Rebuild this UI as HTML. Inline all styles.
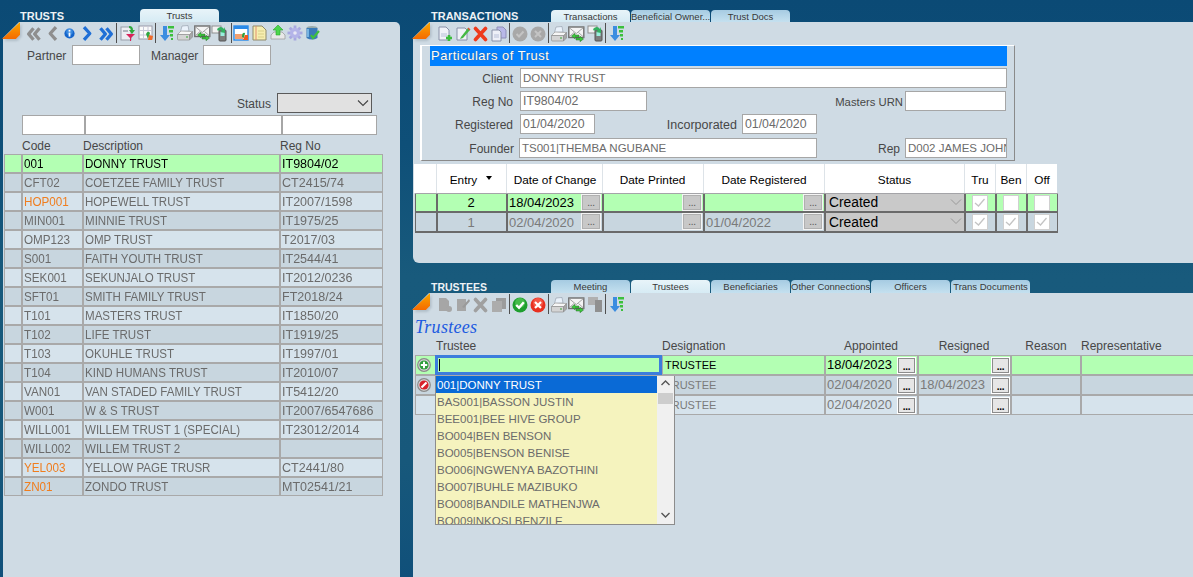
<!DOCTYPE html><html><head><meta charset="utf-8"><style>
*{margin:0;padding:0;box-sizing:border-box}
html,body{width:1193px;height:577px;overflow:hidden}
body{position:relative;font-family:"Liberation Sans",sans-serif;font-size:12px;
 background:linear-gradient(180deg,#0b4a75 0%,#0e4f78 25%,#185a7c 48%,#17587b 80%,#10507a 100%);}
.a{position:absolute}
.t{white-space:nowrap;line-height:14px}
.panel{background:#cfdbe4}
.ttl{font-weight:bold;font-size:11px;color:#eef2f6;line-height:12px}
.tab{border-radius:4px 4px 0 0;font-size:9.5px;color:#383838;text-align:center;line-height:14px;overflow:hidden;white-space:nowrap}
.tabA{background:linear-gradient(180deg,#e8f4f9,#d6ebf4)}
.tabI{background:linear-gradient(180deg,#a6cbe2 0%,#b8d8ea 60%,#c4e0ef 100%)}
.dog{width:17px;height:17px}
.inp{background:#fff;border:1px solid #a6a6a6}
.lbl{color:#474747}
.sep{width:2px;background:#5a5a5a}
</style></head><body>
<svg width="0" height="0" style="position:absolute"><defs><linearGradient id="og" x1="0" y1="0" x2="0" y2="1"><stop offset="0" stop-color="#f9a800"/><stop offset="1" stop-color="#f56a00"/></linearGradient><filter id="bl" x="-20%" y="-20%" width="140%" height="140%"><feGaussianBlur stdDeviation="1"/></filter></defs></svg>
<div class="a panel" style="left:3px;top:22px;width:397px;height:560px;border-top-right-radius:5px;clip-path:polygon(16px 0,100% 0,100% 100%,0 100%,0 16px);"></div>
<div class="a panel" style="left:413px;top:22px;width:800px;height:241px;border-bottom-left-radius:6px;clip-path:polygon(16px 0,100% 0,100% 100%,0 100%,0 16px);"></div>
<div class="a panel" style="left:413px;top:293px;width:800px;height:300px;clip-path:polygon(16px 0,100% 0,100% 100%,0 100%,0 16px);"></div>
<svg class="a" style="left:2px;top:22px" width="22" height="22"><path d="M19.5 2 V14.5 L15.5 19 H2Z" fill="#7a8a96" opacity=".35" filter="url(#bl)"/><path d="M18 0 V12.8 L13.8 17 H0Z" fill="url(#og)"/></svg>
<svg class="a" style="left:412px;top:22px" width="22" height="22"><path d="M19.5 2 V14.5 L15.5 19 H2Z" fill="#7a8a96" opacity=".35" filter="url(#bl)"/><path d="M18 0 V12.8 L13.8 17 H0Z" fill="url(#og)"/></svg>
<svg class="a" style="left:412px;top:293px" width="22" height="22"><path d="M19.5 2 V14.5 L15.5 19 H2Z" fill="#7a8a96" opacity=".35" filter="url(#bl)"/><path d="M18 0 V12.8 L13.8 17 H0Z" fill="url(#og)"/></svg>
<div class="a t ttl" style="left:20px;top:10px;">TRUSTS</div>
<div class="a t ttl" style="left:431px;top:10px;">TRANSACTIONS</div>
<div class="a t ttl" style="left:431px;top:281px;font-size:10.5px">TRUSTEES</div>
<div class="a tab tabA" style="left:140px;top:9px;width:79px;height:13px;">Trusts</div>
<div class="a tab tabA" style="left:551px;top:10px;width:79px;height:12px;">Transactions</div>
<div class="a tab tabI" style="left:631px;top:10px;width:79px;height:12px;">Beneficial Owner...</div>
<div class="a tab tabI" style="left:711px;top:10px;width:79px;height:12px;">Trust Docs</div>
<svg class="a" style="left:26px;top:27px" width="16" height="14" viewBox="0 0 16 14"><path d="M7.5 1.2 L2.6 7 L7.5 12.8 M13.5 1.2 L8.6 7 L13.5 12.8" stroke="#8e8e8e" stroke-width="3.3" fill="none" stroke-linejoin="round"/></svg>
<svg class="a" style="left:47px;top:26px" width="11" height="15" viewBox="0 0 11 15"><path d="M9 1.2 L3.2 7.5 L9 13.8" stroke="#8e8e8e" stroke-width="3.3" fill="none" stroke-linejoin="round"/></svg>
<svg class="a" style="left:64px;top:28px" width="11" height="11" viewBox="0 0 11 11"><circle cx="5.5" cy="5.5" r="5.1" fill="#1465cc"/><circle cx="5.5" cy="3.8" r="3.3" fill="#5aaaf2" opacity=".55"/><rect x="4.6" y="1.8" width="1.8" height="1.8" fill="#fff"/><rect x="4.6" y="4.6" width="1.8" height="4" fill="#fff"/></svg>
<svg class="a" style="left:82px;top:26px" width="11" height="15" viewBox="0 0 11 15"><path d="M2 1.2 L7.8 7.5 L2 13.8" stroke="#1f6fd6" stroke-width="3.3" fill="none" stroke-linejoin="round"/></svg>
<svg class="a" style="left:98px;top:27px" width="16" height="14" viewBox="0 0 16 14"><path d="M2.5 1.2 L7.4 7 L2.5 12.8 M8.5 1.2 L13.4 7 L8.5 12.8" stroke="#1f6fd6" stroke-width="3.3" fill="none" stroke-linejoin="round"/></svg>
<div class="a " style="left:116px;top:23px;width:1px;height:20px;background:#4f4f4f"></div>
<svg class="a" style="left:120px;top:25px" width="16" height="17" viewBox="0 0 16 17"><rect x="1" y="2" width="10" height="13" fill="#eceef2" stroke="#9aa0aa"/><rect x="3" y="5" width="5" height="2" fill="#b0b4bc"/><path d="M6 9 H15 L11 13 V16 H10 V13 Z" fill="#d8245a"/><path d="M9 1 Q13 1 13 5 L15 5 L12 9 L9 5 L11 5 Q11 3 9 3Z" fill="#2eaa3a"/></svg>
<svg class="a" style="left:138px;top:25px" width="16" height="16" viewBox="0 0 16 16"><rect x="1" y="1" width="13" height="13" fill="#fafafa" stroke="#9a9aa8"/><path d="M1 5.5H14M1 10H14M5.5 1V14M10 1V14" stroke="#c8c8d8"/><path d="M8 9 Q10 5 12 8 L10 14" fill="#2fa640"/><path d="M11 10 L15 11 L14 15 L10 15 Z" fill="#f06a2a"/></svg>
<div class="a " style="left:155px;top:23px;width:1px;height:20px;background:#4f4f4f"></div>
<svg class="a" style="left:159px;top:25px" width="16" height="17" viewBox="0 0 16 17"><path d="M4 1 H8 V10 H11 L6 16 L1 10 H4 Z" fill="#3c8de0"/><rect x="9" y="1" width="6" height="2.5" fill="#3cc03c"/><rect x="10" y="5" width="4" height="2.5" fill="#3cc03c"/><rect x="11" y="9" width="3" height="2.5" fill="#3cc03c"/><rect x="12" y="13" width="2" height="2" fill="#3cc03c"/></svg>
<svg class="a" style="left:177px;top:25px" width="16" height="16" viewBox="0 0 16 16"><path d="M3.5 6.5 L5 1 L11 0.5 L12 6Z" fill="#eaf2fb" stroke="#9aa4b0" stroke-width=".7"/><path d="M0.5 9.5 L4 6 L15.5 6.5 L12.5 10Z" fill="#f6f6f6" stroke="#9a9a9a" stroke-width=".7"/><path d="M0.5 9.5 H12.5 V15 H1.5 Q0.5 15 0.5 14Z" fill="#d4d4d4" stroke="#8f8f8f" stroke-width=".7"/><path d="M12.5 10 L15.5 6.5 V12 L12.5 15Z" fill="#a8a8a8" stroke="#8f8f8f" stroke-width=".7"/><rect x="9" y="11.5" width="2" height="1" fill="#32a832"/></svg>
<svg class="a" style="left:194px;top:25px" width="17" height="16" viewBox="0 0 17 16"><rect x="0.8" y="1" width="15" height="10.5" fill="#f4f4f4" stroke="#6e6e6e" stroke-width="1.4"/><path d="M1 1.5 L8.3 7.5 L15.5 1.5 M1 11 L6 6.5 M15.5 11 L10.5 6.5" stroke="#9a9a9a" fill="none" stroke-width=".9"/><path d="M3.5 10 L7 7.3 V9 H11 V11 H7 V12.7Z" fill="#3cc83c" stroke="#2a6a2a" stroke-width=".5"/><path d="M15.5 13 L12 10.3 V12 H8 V14 H12 V15.7Z" fill="#3cc83c" stroke="#2a6a2a" stroke-width=".5"/></svg>
<svg class="a" style="left:211px;top:25px" width="17" height="17" viewBox="0 0 17 17"><rect x="1" y="1" width="9" height="7" fill="#f2f2f2" stroke="#8f8f8f"/><rect x="8" y="5" width="7" height="11" rx="1" fill="#7d7d7d" stroke="#555"/><rect x="9.5" y="7" width="4" height="4" fill="#9ed"/><path d="M6 4 Q10 0 13 4 L14 2 L14 8 L9 7 L11 6 Q9 4 7 6Z" fill="#33b060"/></svg>
<div class="a " style="left:231px;top:23px;width:1px;height:20px;background:#4f4f4f"></div>
<svg class="a" style="left:233px;top:25px" width="16" height="16" viewBox="0 0 16 16"><rect x="1" y="1" width="14" height="14" fill="#fff" stroke="#2a8ae8" stroke-width="1.4"/><rect x="1" y="1" width="14" height="3" fill="#2a8ae8"/><rect x="2" y="9" width="8" height="5" fill="#f2a070"/><path d="M9 12 Q9 7 12 8 L11 13" fill="#2ea040"/><path d="M12 10 L15 10 L15 15 L10 15Z" fill="#f05a20"/></svg>
<svg class="a" style="left:252px;top:25px" width="15" height="16" viewBox="0 0 15 16"><path d="M1 1 H10 L14 5 V15 H1Z" fill="#f6eeb0" stroke="#8f8a6a"/><path d="M4 1 V15" stroke="#e09070"/><path d="M6 6 H12 M6 9 H12 M6 12 H12" stroke="#d8cf88"/></svg>
<svg class="a" style="left:270px;top:24px" width="16" height="17" viewBox="0 0 16 17"><path d="M1 11 L4 8 H12 L15 11 V15 H1Z" fill="#e8e8e8" stroke="#a0a0a0" stroke-width=".8"/><path d="M8 1 L13 6 H10 V11 H6 V6 H3Z" fill="#4cd64c" stroke="#2aa52a" stroke-width=".6"/></svg>
<svg class="a" style="left:287px;top:25px" width="16" height="16" viewBox="0 0 16 16"><rect x="6.6" y="0.5" width="2.8" height="4" fill="#a8a8e0" transform="rotate(0 8 8)"/><rect x="6.6" y="0.5" width="2.8" height="4" fill="#a8a8e0" transform="rotate(45 8 8)"/><rect x="6.6" y="0.5" width="2.8" height="4" fill="#a8a8e0" transform="rotate(90 8 8)"/><rect x="6.6" y="0.5" width="2.8" height="4" fill="#a8a8e0" transform="rotate(135 8 8)"/><rect x="6.6" y="0.5" width="2.8" height="4" fill="#a8a8e0" transform="rotate(180 8 8)"/><rect x="6.6" y="0.5" width="2.8" height="4" fill="#a8a8e0" transform="rotate(225 8 8)"/><rect x="6.6" y="0.5" width="2.8" height="4" fill="#a8a8e0" transform="rotate(270 8 8)"/><rect x="6.6" y="0.5" width="2.8" height="4" fill="#a8a8e0" transform="rotate(315 8 8)"/><circle cx="8" cy="8" r="5" fill="#b4b4e8"/><circle cx="8" cy="8" r="1.8" fill="#e8e8f4"/></svg>
<svg class="a" style="left:305px;top:25px" width="15" height="16" viewBox="0 0 15 16"><ellipse cx="7" cy="3" rx="5.5" ry="2" fill="#9aa"/><path d="M1.5 3 V13 Q7 16 12.5 13 V3Z" fill="#3a7ab8"/><path d="M3 4 V12" stroke="#8cc8f0" stroke-width="1.5"/><path d="M6 10 L8 13 L14 6" stroke="#3ec03e" stroke-width="2.2" fill="none"/></svg>
<div class="a t lbl" style="left:27px;top:49px;">Partner</div>
<div class="a inp" style="left:72px;top:45px;width:68px;height:20px;"></div>
<div class="a t lbl" style="left:151px;top:49px;">Manager</div>
<div class="a inp" style="left:203px;top:45px;width:68px;height:20px;"></div>
<div class="a t lbl" style="left:237px;top:97px;">Status</div>
<div class="a " style="left:277px;top:93px;width:95px;height:20px;background:#e1e1e1;border:1px solid #5a5a5a"></div>
<svg class="a" style="left:356px;top:97px" width="14" height="12" viewBox="0 0 14 12"><path d="M2 3.5 L7 8.5 L12 3.5" stroke="#444" stroke-width="1.1" fill="none"/></svg>
<div class="a inp" style="left:22px;top:115px;width:63px;height:20px;"></div>
<div class="a inp" style="left:85px;top:115px;width:197px;height:20px;"></div>
<div class="a inp" style="left:282px;top:115px;width:95px;height:20px;"></div>
<div class="a t lbl" style="left:22px;top:139px;">Code</div>
<div class="a t lbl" style="left:83px;top:139px;">Description</div>
<div class="a t lbl" style="left:280px;top:139px;">Reg No</div>
<div class="a " style="left:4px;top:154px;width:379px;height:342px;background:#a9a9a9"></div>
<div class="a " style="left:5px;top:155px;width:16px;height:17px;background:#b3ffb3"></div>
<div class="a " style="left:23px;top:155px;width:59px;height:17px;background:#b3ffb3"></div>
<div class="a " style="left:84px;top:155px;width:195px;height:17px;background:#b3ffb3"></div>
<div class="a " style="left:281px;top:155px;width:101px;height:17px;background:#b3ffb3"></div>
<div class="a t " style="left:24px;top:156px;color:#000;line-height:17px;font-size:12.3px;transform:scaleX(.95);transform-origin:0 0">001</div>
<div class="a t " style="left:85px;top:156px;color:#000;line-height:17px;font-size:12.3px;transform:scaleX(.94);transform-origin:0 0">DONNY TRUST</div>
<div class="a t " style="left:282px;top:156px;color:#000;line-height:17px;font-size:12.3px;transform:scaleX(1.02);transform-origin:0 0">IT9804/02</div>
<div class="a " style="left:5px;top:174px;width:16px;height:17px;background:#c8d6df"></div>
<div class="a " style="left:23px;top:174px;width:59px;height:17px;background:#c8d6df"></div>
<div class="a " style="left:84px;top:174px;width:195px;height:17px;background:#c8d6df"></div>
<div class="a " style="left:281px;top:174px;width:101px;height:17px;background:#c8d6df"></div>
<div class="a t " style="left:24px;top:175px;color:#6b6b6b;line-height:17px;font-size:12.3px;transform:scaleX(.95);transform-origin:0 0">CFT02</div>
<div class="a t " style="left:85px;top:175px;color:#6b6b6b;line-height:17px;font-size:12.3px;transform:scaleX(.94);transform-origin:0 0">COETZEE FAMILY TRUST</div>
<div class="a t " style="left:282px;top:175px;color:#6b6b6b;line-height:17px;font-size:12.3px;transform:scaleX(1.02);transform-origin:0 0">CT2415/74</div>
<div class="a " style="left:5px;top:193px;width:16px;height:17px;background:#d6e3ec"></div>
<div class="a " style="left:23px;top:193px;width:59px;height:17px;background:#d6e3ec"></div>
<div class="a " style="left:84px;top:193px;width:195px;height:17px;background:#d6e3ec"></div>
<div class="a " style="left:281px;top:193px;width:101px;height:17px;background:#d6e3ec"></div>
<div class="a t " style="left:24px;top:194px;color:#f07d1e;line-height:17px;font-size:12.3px;transform:scaleX(.95);transform-origin:0 0">HOP001</div>
<div class="a t " style="left:85px;top:194px;color:#6b6b6b;line-height:17px;font-size:12.3px;transform:scaleX(.94);transform-origin:0 0">HOPEWELL TRUST</div>
<div class="a t " style="left:282px;top:194px;color:#6b6b6b;line-height:17px;font-size:12.3px;transform:scaleX(1.02);transform-origin:0 0">IT2007/1598</div>
<div class="a " style="left:5px;top:212px;width:16px;height:17px;background:#c8d6df"></div>
<div class="a " style="left:23px;top:212px;width:59px;height:17px;background:#c8d6df"></div>
<div class="a " style="left:84px;top:212px;width:195px;height:17px;background:#c8d6df"></div>
<div class="a " style="left:281px;top:212px;width:101px;height:17px;background:#c8d6df"></div>
<div class="a t " style="left:24px;top:213px;color:#6b6b6b;line-height:17px;font-size:12.3px;transform:scaleX(.95);transform-origin:0 0">MIN001</div>
<div class="a t " style="left:85px;top:213px;color:#6b6b6b;line-height:17px;font-size:12.3px;transform:scaleX(.94);transform-origin:0 0">MINNIE TRUST</div>
<div class="a t " style="left:282px;top:213px;color:#6b6b6b;line-height:17px;font-size:12.3px;transform:scaleX(1.02);transform-origin:0 0">IT1975/25</div>
<div class="a " style="left:5px;top:231px;width:16px;height:17px;background:#d6e3ec"></div>
<div class="a " style="left:23px;top:231px;width:59px;height:17px;background:#d6e3ec"></div>
<div class="a " style="left:84px;top:231px;width:195px;height:17px;background:#d6e3ec"></div>
<div class="a " style="left:281px;top:231px;width:101px;height:17px;background:#d6e3ec"></div>
<div class="a t " style="left:24px;top:232px;color:#6b6b6b;line-height:17px;font-size:12.3px;transform:scaleX(.95);transform-origin:0 0">OMP123</div>
<div class="a t " style="left:85px;top:232px;color:#6b6b6b;line-height:17px;font-size:12.3px;transform:scaleX(.94);transform-origin:0 0">OMP TRUST</div>
<div class="a t " style="left:282px;top:232px;color:#6b6b6b;line-height:17px;font-size:12.3px;transform:scaleX(1.02);transform-origin:0 0">T2017/03</div>
<div class="a " style="left:5px;top:250px;width:16px;height:17px;background:#c8d6df"></div>
<div class="a " style="left:23px;top:250px;width:59px;height:17px;background:#c8d6df"></div>
<div class="a " style="left:84px;top:250px;width:195px;height:17px;background:#c8d6df"></div>
<div class="a " style="left:281px;top:250px;width:101px;height:17px;background:#c8d6df"></div>
<div class="a t " style="left:24px;top:251px;color:#6b6b6b;line-height:17px;font-size:12.3px;transform:scaleX(.95);transform-origin:0 0">S001</div>
<div class="a t " style="left:85px;top:251px;color:#6b6b6b;line-height:17px;font-size:12.3px;transform:scaleX(.94);transform-origin:0 0">FAITH YOUTH TRUST</div>
<div class="a t " style="left:282px;top:251px;color:#6b6b6b;line-height:17px;font-size:12.3px;transform:scaleX(1.02);transform-origin:0 0">IT2544/41</div>
<div class="a " style="left:5px;top:269px;width:16px;height:17px;background:#d6e3ec"></div>
<div class="a " style="left:23px;top:269px;width:59px;height:17px;background:#d6e3ec"></div>
<div class="a " style="left:84px;top:269px;width:195px;height:17px;background:#d6e3ec"></div>
<div class="a " style="left:281px;top:269px;width:101px;height:17px;background:#d6e3ec"></div>
<div class="a t " style="left:24px;top:270px;color:#6b6b6b;line-height:17px;font-size:12.3px;transform:scaleX(.95);transform-origin:0 0">SEK001</div>
<div class="a t " style="left:85px;top:270px;color:#6b6b6b;line-height:17px;font-size:12.3px;transform:scaleX(.94);transform-origin:0 0">SEKUNJALO TRUST</div>
<div class="a t " style="left:282px;top:270px;color:#6b6b6b;line-height:17px;font-size:12.3px;transform:scaleX(1.02);transform-origin:0 0">IT2012/0236</div>
<div class="a " style="left:5px;top:288px;width:16px;height:17px;background:#c8d6df"></div>
<div class="a " style="left:23px;top:288px;width:59px;height:17px;background:#c8d6df"></div>
<div class="a " style="left:84px;top:288px;width:195px;height:17px;background:#c8d6df"></div>
<div class="a " style="left:281px;top:288px;width:101px;height:17px;background:#c8d6df"></div>
<div class="a t " style="left:24px;top:289px;color:#6b6b6b;line-height:17px;font-size:12.3px;transform:scaleX(.95);transform-origin:0 0">SFT01</div>
<div class="a t " style="left:85px;top:289px;color:#6b6b6b;line-height:17px;font-size:12.3px;transform:scaleX(.94);transform-origin:0 0">SMITH FAMILY TRUST</div>
<div class="a t " style="left:282px;top:289px;color:#6b6b6b;line-height:17px;font-size:12.3px;transform:scaleX(1.02);transform-origin:0 0">FT2018/24</div>
<div class="a " style="left:5px;top:307px;width:16px;height:17px;background:#d6e3ec"></div>
<div class="a " style="left:23px;top:307px;width:59px;height:17px;background:#d6e3ec"></div>
<div class="a " style="left:84px;top:307px;width:195px;height:17px;background:#d6e3ec"></div>
<div class="a " style="left:281px;top:307px;width:101px;height:17px;background:#d6e3ec"></div>
<div class="a t " style="left:24px;top:308px;color:#6b6b6b;line-height:17px;font-size:12.3px;transform:scaleX(.95);transform-origin:0 0">T101</div>
<div class="a t " style="left:85px;top:308px;color:#6b6b6b;line-height:17px;font-size:12.3px;transform:scaleX(.94);transform-origin:0 0">MASTERS TRUST</div>
<div class="a t " style="left:282px;top:308px;color:#6b6b6b;line-height:17px;font-size:12.3px;transform:scaleX(1.02);transform-origin:0 0">IT1850/20</div>
<div class="a " style="left:5px;top:326px;width:16px;height:17px;background:#c8d6df"></div>
<div class="a " style="left:23px;top:326px;width:59px;height:17px;background:#c8d6df"></div>
<div class="a " style="left:84px;top:326px;width:195px;height:17px;background:#c8d6df"></div>
<div class="a " style="left:281px;top:326px;width:101px;height:17px;background:#c8d6df"></div>
<div class="a t " style="left:24px;top:327px;color:#6b6b6b;line-height:17px;font-size:12.3px;transform:scaleX(.95);transform-origin:0 0">T102</div>
<div class="a t " style="left:85px;top:327px;color:#6b6b6b;line-height:17px;font-size:12.3px;transform:scaleX(.94);transform-origin:0 0">LIFE TRUST</div>
<div class="a t " style="left:282px;top:327px;color:#6b6b6b;line-height:17px;font-size:12.3px;transform:scaleX(1.02);transform-origin:0 0">IT1919/25</div>
<div class="a " style="left:5px;top:345px;width:16px;height:17px;background:#d6e3ec"></div>
<div class="a " style="left:23px;top:345px;width:59px;height:17px;background:#d6e3ec"></div>
<div class="a " style="left:84px;top:345px;width:195px;height:17px;background:#d6e3ec"></div>
<div class="a " style="left:281px;top:345px;width:101px;height:17px;background:#d6e3ec"></div>
<div class="a t " style="left:24px;top:346px;color:#6b6b6b;line-height:17px;font-size:12.3px;transform:scaleX(.95);transform-origin:0 0">T103</div>
<div class="a t " style="left:85px;top:346px;color:#6b6b6b;line-height:17px;font-size:12.3px;transform:scaleX(.94);transform-origin:0 0">OKUHLE TRUST</div>
<div class="a t " style="left:282px;top:346px;color:#6b6b6b;line-height:17px;font-size:12.3px;transform:scaleX(1.02);transform-origin:0 0">IT1997/01</div>
<div class="a " style="left:5px;top:364px;width:16px;height:17px;background:#c8d6df"></div>
<div class="a " style="left:23px;top:364px;width:59px;height:17px;background:#c8d6df"></div>
<div class="a " style="left:84px;top:364px;width:195px;height:17px;background:#c8d6df"></div>
<div class="a " style="left:281px;top:364px;width:101px;height:17px;background:#c8d6df"></div>
<div class="a t " style="left:24px;top:365px;color:#6b6b6b;line-height:17px;font-size:12.3px;transform:scaleX(.95);transform-origin:0 0">T104</div>
<div class="a t " style="left:85px;top:365px;color:#6b6b6b;line-height:17px;font-size:12.3px;transform:scaleX(.94);transform-origin:0 0">KIND HUMANS TRUST</div>
<div class="a t " style="left:282px;top:365px;color:#6b6b6b;line-height:17px;font-size:12.3px;transform:scaleX(1.02);transform-origin:0 0">IT2010/07</div>
<div class="a " style="left:5px;top:383px;width:16px;height:17px;background:#d6e3ec"></div>
<div class="a " style="left:23px;top:383px;width:59px;height:17px;background:#d6e3ec"></div>
<div class="a " style="left:84px;top:383px;width:195px;height:17px;background:#d6e3ec"></div>
<div class="a " style="left:281px;top:383px;width:101px;height:17px;background:#d6e3ec"></div>
<div class="a t " style="left:24px;top:384px;color:#6b6b6b;line-height:17px;font-size:12.3px;transform:scaleX(.95);transform-origin:0 0">VAN01</div>
<div class="a t " style="left:85px;top:384px;color:#6b6b6b;line-height:17px;font-size:12.3px;transform:scaleX(.94);transform-origin:0 0">VAN STADED FAMILY TRUST</div>
<div class="a t " style="left:282px;top:384px;color:#6b6b6b;line-height:17px;font-size:12.3px;transform:scaleX(1.02);transform-origin:0 0">IT5412/20</div>
<div class="a " style="left:5px;top:402px;width:16px;height:17px;background:#c8d6df"></div>
<div class="a " style="left:23px;top:402px;width:59px;height:17px;background:#c8d6df"></div>
<div class="a " style="left:84px;top:402px;width:195px;height:17px;background:#c8d6df"></div>
<div class="a " style="left:281px;top:402px;width:101px;height:17px;background:#c8d6df"></div>
<div class="a t " style="left:24px;top:403px;color:#6b6b6b;line-height:17px;font-size:12.3px;transform:scaleX(.95);transform-origin:0 0">W001</div>
<div class="a t " style="left:85px;top:403px;color:#6b6b6b;line-height:17px;font-size:12.3px;transform:scaleX(.94);transform-origin:0 0">W &amp; S TRUST</div>
<div class="a t " style="left:282px;top:403px;color:#6b6b6b;line-height:17px;font-size:12.3px;transform:scaleX(1.02);transform-origin:0 0">IT2007/6547686</div>
<div class="a " style="left:5px;top:421px;width:16px;height:17px;background:#d6e3ec"></div>
<div class="a " style="left:23px;top:421px;width:59px;height:17px;background:#d6e3ec"></div>
<div class="a " style="left:84px;top:421px;width:195px;height:17px;background:#d6e3ec"></div>
<div class="a " style="left:281px;top:421px;width:101px;height:17px;background:#d6e3ec"></div>
<div class="a t " style="left:24px;top:422px;color:#6b6b6b;line-height:17px;font-size:12.3px;transform:scaleX(.95);transform-origin:0 0">WILL001</div>
<div class="a t " style="left:85px;top:422px;color:#6b6b6b;line-height:17px;font-size:12.3px;transform:scaleX(.94);transform-origin:0 0">WILLEM TRUST 1 (SPECIAL)</div>
<div class="a t " style="left:282px;top:422px;color:#6b6b6b;line-height:17px;font-size:12.3px;transform:scaleX(1.02);transform-origin:0 0">IT23012/2014</div>
<div class="a " style="left:5px;top:440px;width:16px;height:17px;background:#c8d6df"></div>
<div class="a " style="left:23px;top:440px;width:59px;height:17px;background:#c8d6df"></div>
<div class="a " style="left:84px;top:440px;width:195px;height:17px;background:#c8d6df"></div>
<div class="a " style="left:281px;top:440px;width:101px;height:17px;background:#c8d6df"></div>
<div class="a t " style="left:24px;top:441px;color:#6b6b6b;line-height:17px;font-size:12.3px;transform:scaleX(.95);transform-origin:0 0">WILL002</div>
<div class="a t " style="left:85px;top:441px;color:#6b6b6b;line-height:17px;font-size:12.3px;transform:scaleX(.94);transform-origin:0 0">WILLEM TRUST 2</div>
<div class="a t " style="left:282px;top:441px;color:#6b6b6b;line-height:17px;font-size:12.3px;transform:scaleX(1.02);transform-origin:0 0"></div>
<div class="a " style="left:5px;top:459px;width:16px;height:17px;background:#d6e3ec"></div>
<div class="a " style="left:23px;top:459px;width:59px;height:17px;background:#d6e3ec"></div>
<div class="a " style="left:84px;top:459px;width:195px;height:17px;background:#d6e3ec"></div>
<div class="a " style="left:281px;top:459px;width:101px;height:17px;background:#d6e3ec"></div>
<div class="a t " style="left:24px;top:460px;color:#f07d1e;line-height:17px;font-size:12.3px;transform:scaleX(.95);transform-origin:0 0">YEL003</div>
<div class="a t " style="left:85px;top:460px;color:#6b6b6b;line-height:17px;font-size:12.3px;transform:scaleX(.94);transform-origin:0 0">YELLOW PAGE TRUSR</div>
<div class="a t " style="left:282px;top:460px;color:#6b6b6b;line-height:17px;font-size:12.3px;transform:scaleX(1.02);transform-origin:0 0">CT2441/80</div>
<div class="a " style="left:5px;top:478px;width:16px;height:17px;background:#c8d6df"></div>
<div class="a " style="left:23px;top:478px;width:59px;height:17px;background:#c8d6df"></div>
<div class="a " style="left:84px;top:478px;width:195px;height:17px;background:#c8d6df"></div>
<div class="a " style="left:281px;top:478px;width:101px;height:17px;background:#c8d6df"></div>
<div class="a t " style="left:24px;top:479px;color:#f07d1e;line-height:17px;font-size:12.3px;transform:scaleX(.95);transform-origin:0 0">ZN01</div>
<div class="a t " style="left:85px;top:479px;color:#6b6b6b;line-height:17px;font-size:12.3px;transform:scaleX(.94);transform-origin:0 0">ZONDO TRUST</div>
<div class="a t " style="left:282px;top:479px;color:#6b6b6b;line-height:17px;font-size:12.3px;transform:scaleX(1.02);transform-origin:0 0">MT02541/21</div>
<svg class="a" style="left:438px;top:26px" width="15" height="16" viewBox="0 0 15 16"><path d="M1 1 H8 L11 4 V14 H1Z" fill="#f0f2f8" stroke="#8890a8"/><path d="M3 8 H9 M3 10 H9" stroke="#b8c0d8"/><path d="M11 9 V15 M8 12 H14" stroke="#3cbc3c" stroke-width="2.6"/></svg>
<svg class="a" style="left:456px;top:26px" width="15" height="16" viewBox="0 0 15 16"><path d="M1 2 H9 L11 4 V14 H1Z" fill="#f0f2f8" stroke="#8890a8"/><path d="M5 11 L12 2 L14 4 L7 12 L4 13Z" fill="#44b844"/><path d="M12 2 L14 4" stroke="#e05030" stroke-width="1.5"/></svg>
<svg class="a" style="left:473px;top:26px" width="15" height="16" viewBox="0 0 15 16"><path d="M2.5 2.5 L12.5 13.5 M12.5 2.5 L2.5 13.5" stroke="#ee3a1c" stroke-width="3.6" stroke-linecap="round"/></svg>
<svg class="a" style="left:491px;top:26px" width="16" height="16" viewBox="0 0 16 16"><path d="M6 1 H12 L15 4 V12 H6Z" fill="#b8b8e8" stroke="#8f8fb8"/><path d="M1 4 H8 L10 6 V15 H1Z" fill="#eef0f8" stroke="#8890a8"/><path d="M3 9 H8 M3 11 H8" stroke="#b8c0d8"/></svg>
<div class="a " style="left:509px;top:23px;width:1px;height:20px;background:#4f4f4f"></div>
<svg class="a" style="left:512px;top:26px" width="16" height="16" viewBox="0 0 16 16"><circle cx="8" cy="8" r="7.5" fill="#a8a8a8"/><path d="M4.5 8 L7 10.5 L11.5 5.5" stroke="#c4c4c4" stroke-width="2" fill="none"/></svg>
<svg class="a" style="left:530px;top:26px" width="16" height="16" viewBox="0 0 16 16"><circle cx="8" cy="8" r="7.5" fill="#a8a8a8"/><path d="M5 5 L11 11 M11 5 L5 11" stroke="#c4c4c4" stroke-width="2"/></svg>
<div class="a " style="left:548px;top:23px;width:1px;height:20px;background:#4f4f4f"></div>
<svg class="a" style="left:551px;top:26px" width="16" height="16" viewBox="0 0 16 16"><path d="M3.5 6.5 L5 1 L11 0.5 L12 6Z" fill="#eaf2fb" stroke="#9aa4b0" stroke-width=".7"/><path d="M0.5 9.5 L4 6 L15.5 6.5 L12.5 10Z" fill="#f6f6f6" stroke="#9a9a9a" stroke-width=".7"/><path d="M0.5 9.5 H12.5 V15 H1.5 Q0.5 15 0.5 14Z" fill="#d4d4d4" stroke="#8f8f8f" stroke-width=".7"/><path d="M12.5 10 L15.5 6.5 V12 L12.5 15Z" fill="#a8a8a8" stroke="#8f8f8f" stroke-width=".7"/><rect x="9" y="11.5" width="2" height="1" fill="#32a832"/></svg>
<svg class="a" style="left:568px;top:26px" width="17" height="16" viewBox="0 0 17 16"><rect x="0.8" y="1" width="15" height="10.5" fill="#f4f4f4" stroke="#6e6e6e" stroke-width="1.4"/><path d="M1 1.5 L8.3 7.5 L15.5 1.5 M1 11 L6 6.5 M15.5 11 L10.5 6.5" stroke="#9a9a9a" fill="none" stroke-width=".9"/><path d="M3.5 10 L7 7.3 V9 H11 V11 H7 V12.7Z" fill="#3cc83c" stroke="#2a6a2a" stroke-width=".5"/><path d="M15.5 13 L12 10.3 V12 H8 V14 H12 V15.7Z" fill="#3cc83c" stroke="#2a6a2a" stroke-width=".5"/></svg>
<svg class="a" style="left:587px;top:25px" width="17" height="17" viewBox="0 0 17 17"><rect x="1" y="1" width="9" height="7" fill="#f2f2f2" stroke="#8f8f8f"/><rect x="8" y="5" width="7" height="11" rx="1" fill="#7d7d7d" stroke="#555"/><rect x="9.5" y="7" width="4" height="4" fill="#9ed"/><path d="M6 4 Q10 0 13 4 L14 2 L14 8 L9 7 L11 6 Q9 4 7 6Z" fill="#33b060"/></svg>
<div class="a " style="left:605px;top:23px;width:1px;height:20px;background:#4f4f4f"></div>
<svg class="a" style="left:609px;top:25px" width="16" height="17" viewBox="0 0 16 17"><path d="M4 1 H8 V10 H11 L6 16 L1 10 H4 Z" fill="#3c8de0"/><rect x="9" y="1" width="6" height="2.5" fill="#3cc03c"/><rect x="10" y="5" width="4" height="2.5" fill="#3cc03c"/><rect x="11" y="9" width="3" height="2.5" fill="#3cc03c"/><rect x="12" y="13" width="2" height="2" fill="#3cc03c"/></svg>
<div class="a " style="left:420px;top:45px;width:595px;height:116px;border-top:1px solid #fff;border-left:2px solid #fff;border-right:1px solid #8a8a8a;border-bottom:1px solid #8a8a8a"></div>
<div class="a " style="left:430px;top:46px;width:577px;height:20px;background:#0080ff"></div>
<div class="a t " style="left:431px;top:46px;color:#fff;font-size:13px;line-height:20px;letter-spacing:0.5px;text-shadow:0 0 1px #555">Particulars of Trust</div>
<div class="a inp" style="left:520px;top:68px;width:487px;height:20px;"><div class="t" style="color:#6b6b6b;line-height:18px;padding-left:2px;font-size:11.5px">DONNY TRUST</div></div>
<div class="a t lbl" style="right:680px;top:72px;">Client</div>
<div class="a inp" style="left:520px;top:91px;width:127px;height:20px;"><div class="t" style="color:#6b6b6b;line-height:18px;padding-left:2px;font-size:11.5px;font-size:12.3px">IT9804/02</div></div>
<div class="a t lbl" style="right:680px;top:95px;">Reg No</div>
<div class="a t lbl" style="right:290px;top:95px;font-size:11.3px">Masters URN</div>
<div class="a inp" style="left:905px;top:91px;width:101px;height:20px;"></div>
<div class="a inp" style="left:520px;top:114px;width:75px;height:20px;"><div class="t" style="color:#6b6b6b;line-height:18px;padding-left:2px;font-size:11.5px;font-size:12.3px">01/04/2020</div></div>
<div class="a t lbl" style="right:680px;top:118px;">Registered</div>
<div class="a t lbl" style="right:456px;top:118px;font-size:12.5px">Incorporated</div>
<div class="a inp" style="left:742px;top:114px;width:75px;height:20px;"><div class="t" style="color:#6b6b6b;line-height:18px;padding-left:2px;font-size:11.5px;font-size:12.3px">01/04/2020</div></div>
<div class="a inp" style="left:519px;top:138px;width:298px;height:20px;"><div class="t" style="color:#6b6b6b;line-height:18px;padding-left:2px;font-size:11.5px">TS001|THEMBA NGUBANE</div></div>
<div class="a t lbl" style="right:679px;top:142px;">Founder</div>
<div class="a t lbl" style="right:293px;top:142px;">Rep</div>
<div class="a inp" style="left:905px;top:138px;width:102px;height:20px;overflow:hidden"><div class="t" style="color:#6b6b6b;line-height:18px;padding-left:2px;font-size:11.5px">D002 JAMES JOHNSON</div></div>
<div class="a " style="left:414px;top:164px;width:643px;height:29px;background:#fff"></div>
<div class="a " style="left:436px;top:164px;width:1px;height:29px;background:#dde3e8"></div>
<div class="a " style="left:506px;top:164px;width:1px;height:29px;background:#dde3e8"></div>
<div class="a " style="left:602px;top:164px;width:1px;height:29px;background:#dde3e8"></div>
<div class="a " style="left:703px;top:164px;width:1px;height:29px;background:#dde3e8"></div>
<div class="a " style="left:824px;top:164px;width:1px;height:29px;background:#dde3e8"></div>
<div class="a " style="left:964px;top:164px;width:1px;height:29px;background:#dde3e8"></div>
<div class="a " style="left:995px;top:164px;width:1px;height:29px;background:#dde3e8"></div>
<div class="a " style="left:1026px;top:164px;width:1px;height:29px;background:#dde3e8"></div>
<div class="a t" style="left:363.5px;width:200px;text-align:center;top:173px;color:#000;line-height:14px;font-size:11.8px">Entry</div>
<svg class="a" style="left:486px;top:176px" width="7" height="5" viewBox="0 0 7 5"><path d="M0 0 H6 L3 4Z" fill="#000"/></svg>
<div class="a t" style="left:455px;width:200px;text-align:center;top:173px;color:#000;line-height:14px;font-size:11.8px">Date of Change</div>
<div class="a t" style="left:552.5px;width:200px;text-align:center;top:173px;color:#000;line-height:14px;font-size:11.8px">Date Printed</div>
<div class="a t" style="left:664px;width:200px;text-align:center;top:173px;color:#000;line-height:14px;font-size:11.8px">Date Registered</div>
<div class="a t" style="left:794.5px;width:200px;text-align:center;top:173px;color:#000;line-height:14px;font-size:11.8px">Status</div>
<div class="a t" style="left:880px;width:200px;text-align:center;top:173px;color:#000;line-height:14px;font-size:11.8px">Tru</div>
<div class="a t" style="left:911px;width:200px;text-align:center;top:173px;color:#000;line-height:14px;font-size:11.8px">Ben</div>
<div class="a t" style="left:942px;width:200px;text-align:center;top:173px;color:#000;line-height:14px;font-size:11.8px">Off</div>
<div class="a " style="left:415px;top:193px;width:643px;height:40px;background:#6a6a6a;border-top:1px solid #a4a4a8"></div>
<div class="a " style="left:416px;top:194px;width:20px;height:17px;background:#b3ffb3"></div>
<div class="a " style="left:438px;top:194px;width:68px;height:17px;background:#b3ffb3"></div>
<div class="a " style="left:508px;top:194px;width:94px;height:17px;background:#b3ffb3"></div>
<div class="a " style="left:604px;top:194px;width:99px;height:17px;background:#b3ffb3"></div>
<div class="a " style="left:705px;top:194px;width:119px;height:17px;background:#b3ffb3"></div>
<div class="a " style="left:826px;top:194px;width:138px;height:17px;background:#c9c9c9"></div>
<div class="a " style="left:966px;top:194px;width:29px;height:17px;background:#b3ffb3"></div>
<div class="a " style="left:997px;top:194px;width:29px;height:17px;background:#b3ffb3"></div>
<div class="a " style="left:1028px;top:194px;width:29px;height:17px;background:#b3ffb3"></div>
<div class="a t" style="left:371px;width:200px;text-align:center;top:194px;color:#000;line-height:18px;font-size:13px">2</div>
<div class="a t " style="left:509px;top:194px;color:#000;line-height:18px;font-size:13px">18/04/2023</div>
<div class="a t" style="left:581px;top:194px;width:20px;height:17px;background:#c8c8c8;border:1px solid #f4f4f4;color:#555;font-size:10px;line-height:16px;text-align:center;letter-spacing:-0.3px;box-shadow:inset 0 0 0 1px #b0b0b0">...</div>
<div class="a t" style="left:682px;top:194px;width:20px;height:17px;background:#c8c8c8;border:1px solid #f4f4f4;color:#555;font-size:10px;line-height:16px;text-align:center;letter-spacing:-0.3px;box-shadow:inset 0 0 0 1px #b0b0b0">...</div>
<div class="a t" style="left:803px;top:194px;width:20px;height:17px;background:#c8c8c8;border:1px solid #f4f4f4;color:#555;font-size:10px;line-height:16px;text-align:center;letter-spacing:-0.3px;box-shadow:inset 0 0 0 1px #b0b0b0">...</div>
<div class="a t " style="left:829px;top:194px;color:#000;font-size:13.8px;line-height:18px">Created</div>
<svg class="a" style="left:950px;top:197px" width="12" height="10" viewBox="0 0 12 10"><path d="M1 2.5 L6 7.5 L11 2.5" stroke="#9a9a9a" stroke-width="1" fill="none"/></svg>
<svg class="a" style="left:972px;top:195px" width="16" height="16" viewBox="0 0 16 16"><rect x="0.5" y="0.5" width="15" height="15" fill="#fff" stroke="#d0d0d0"/><path d="M3 8 L6.5 11 L12.5 4" stroke="#c4c4c4" stroke-width="1.3" fill="none"/></svg>
<svg class="a" style="left:1003px;top:195px" width="16" height="16" viewBox="0 0 16 16"><rect x="0.5" y="0.5" width="15" height="15" fill="#fff" stroke="#d0d0d0"/></svg>
<svg class="a" style="left:1034px;top:195px" width="16" height="16" viewBox="0 0 16 16"><rect x="0.5" y="0.5" width="15" height="15" fill="#fff" stroke="#d0d0d0"/></svg>
<div class="a " style="left:416px;top:213px;width:20px;height:18px;background:#c8d6df"></div>
<div class="a " style="left:438px;top:213px;width:68px;height:18px;background:#c8d6df"></div>
<div class="a " style="left:508px;top:213px;width:94px;height:18px;background:#c8d6df"></div>
<div class="a " style="left:604px;top:213px;width:99px;height:18px;background:#c8d6df"></div>
<div class="a " style="left:705px;top:213px;width:119px;height:18px;background:#c8d6df"></div>
<div class="a " style="left:826px;top:213px;width:138px;height:18px;background:#c9c9c9"></div>
<div class="a " style="left:966px;top:213px;width:29px;height:18px;background:#c8d6df"></div>
<div class="a " style="left:997px;top:213px;width:29px;height:18px;background:#c8d6df"></div>
<div class="a " style="left:1028px;top:213px;width:29px;height:18px;background:#c8d6df"></div>
<div class="a t" style="left:371px;width:200px;text-align:center;top:214px;color:#7a7a7a;line-height:18px;font-size:13px">1</div>
<div class="a t " style="left:509px;top:214px;color:#7a7a7a;line-height:18px;font-size:13px">02/04/2020</div>
<div class="a t" style="left:581px;top:213px;width:20px;height:17px;background:#c8c8c8;border:1px solid #f4f4f4;color:#555;font-size:10px;line-height:16px;text-align:center;letter-spacing:-0.3px;box-shadow:inset 0 0 0 1px #b0b0b0">...</div>
<div class="a t" style="left:682px;top:213px;width:20px;height:17px;background:#c8c8c8;border:1px solid #f4f4f4;color:#555;font-size:10px;line-height:16px;text-align:center;letter-spacing:-0.3px;box-shadow:inset 0 0 0 1px #b0b0b0">...</div>
<div class="a t" style="left:803px;top:213px;width:20px;height:17px;background:#c8c8c8;border:1px solid #f4f4f4;color:#555;font-size:10px;line-height:16px;text-align:center;letter-spacing:-0.3px;box-shadow:inset 0 0 0 1px #b0b0b0">...</div>
<div class="a t " style="left:706px;top:214px;color:#7a7a7a;line-height:18px;font-size:13px">01/04/2022</div>
<div class="a t " style="left:829px;top:214px;color:#000;font-size:13.8px;line-height:18px">Created</div>
<svg class="a" style="left:950px;top:216px" width="12" height="10" viewBox="0 0 12 10"><path d="M1 2.5 L6 7.5 L11 2.5" stroke="#9a9a9a" stroke-width="1" fill="none"/></svg>
<svg class="a" style="left:972px;top:214px" width="16" height="16" viewBox="0 0 16 16"><rect x="0.5" y="0.5" width="15" height="15" fill="#fff" stroke="#d0d0d0"/><path d="M3 8 L6.5 11 L12.5 4" stroke="#c4c4c4" stroke-width="1.3" fill="none"/></svg>
<svg class="a" style="left:1003px;top:214px" width="16" height="16" viewBox="0 0 16 16"><rect x="0.5" y="0.5" width="15" height="15" fill="#fff" stroke="#d0d0d0"/><path d="M3 8 L6.5 11 L12.5 4" stroke="#c4c4c4" stroke-width="1.3" fill="none"/></svg>
<svg class="a" style="left:1034px;top:214px" width="16" height="16" viewBox="0 0 16 16"><rect x="0.5" y="0.5" width="15" height="15" fill="#fff" stroke="#d0d0d0"/><path d="M3 8 L6.5 11 L12.5 4" stroke="#c4c4c4" stroke-width="1.3" fill="none"/></svg>
<div class="a tab tabI" style="left:551px;top:280px;width:79px;height:13px;">Meeting</div>
<div class="a tab tabA" style="left:631px;top:280px;width:79px;height:13px;">Trustees</div>
<div class="a tab tabI" style="left:711px;top:280px;width:79px;height:13px;">Beneficiaries</div>
<div class="a tab tabI" style="left:791px;top:280px;width:79px;height:13px;">Other Connections</div>
<div class="a tab tabI" style="left:871px;top:280px;width:79px;height:13px;">Officers</div>
<div class="a tab tabI" style="left:951px;top:280px;width:79px;height:13px;">Trans Documents</div>
<svg class="a" style="left:438px;top:297px" width="15" height="16" viewBox="0 0 15 16"><path d="M1 1 H8 L11 4 V14 H1Z" fill="#a6a6a6"/><circle cx="11" cy="12" r="3" fill="#a6a6a6"/></svg>
<svg class="a" style="left:456px;top:297px" width="15" height="16" viewBox="0 0 15 16"><path d="M1 2 H10 V14 H1Z" fill="#a6a6a6"/><path d="M6 10 L13 2 L14 4 L8 11Z" fill="#9a9a9a"/></svg>
<svg class="a" style="left:473px;top:297px" width="15" height="16" viewBox="0 0 15 16"><path d="M2.5 2.5 L12.5 13.5 M12.5 2.5 L2.5 13.5" stroke="#a0a0a0" stroke-width="3.6" stroke-linecap="round"/></svg>
<svg class="a" style="left:491px;top:297px" width="16" height="16" viewBox="0 0 16 16"><rect x="5" y="1" width="10" height="11" fill="#9c9c9c"/><rect x="1" y="4" width="10" height="11" fill="#acacac"/></svg>
<div class="a " style="left:509px;top:294px;width:1px;height:20px;background:#4f4f4f"></div>
<svg class="a" style="left:512px;top:297px" width="16" height="16" viewBox="0 0 16 16"><circle cx="8" cy="8" r="7.5" fill="#1e9e2e"/><circle cx="8" cy="6" r="5" fill="#5ed05e" opacity=".6"/><path d="M4.2 8 L7 10.8 L11.8 5.2" stroke="#fff" stroke-width="2.4" fill="none"/></svg>
<svg class="a" style="left:530px;top:297px" width="16" height="16" viewBox="0 0 16 16"><circle cx="8" cy="8" r="7.5" fill="#e83020"/><circle cx="8" cy="6" r="5" fill="#ff7a6a" opacity=".5"/><path d="M5 5 L11 11 M11 5 L5 11" stroke="#fff" stroke-width="2.2"/></svg>
<div class="a " style="left:548px;top:294px;width:1px;height:20px;background:#4f4f4f"></div>
<svg class="a" style="left:551px;top:297px" width="16" height="16" viewBox="0 0 16 16"><path d="M3.5 6.5 L5 1 L11 0.5 L12 6Z" fill="#eaf2fb" stroke="#9aa4b0" stroke-width=".7"/><path d="M0.5 9.5 L4 6 L15.5 6.5 L12.5 10Z" fill="#f6f6f6" stroke="#9a9a9a" stroke-width=".7"/><path d="M0.5 9.5 H12.5 V15 H1.5 Q0.5 15 0.5 14Z" fill="#d4d4d4" stroke="#8f8f8f" stroke-width=".7"/><path d="M12.5 10 L15.5 6.5 V12 L12.5 15Z" fill="#a8a8a8" stroke="#8f8f8f" stroke-width=".7"/><rect x="9" y="11.5" width="2" height="1" fill="#32a832"/></svg>
<svg class="a" style="left:568px;top:297px" width="17" height="16" viewBox="0 0 17 16"><rect x="0.8" y="1" width="15" height="10.5" fill="#f4f4f4" stroke="#6e6e6e" stroke-width="1.4"/><path d="M1 1.5 L8.3 7.5 L15.5 1.5 M1 11 L6 6.5 M15.5 11 L10.5 6.5" stroke="#9a9a9a" fill="none" stroke-width=".9"/><path d="M3.5 10 L7 7.3 V9 H11 V11 H7 V12.7Z" fill="#3cc83c" stroke="#2a6a2a" stroke-width=".5"/><path d="M15.5 13 L12 10.3 V12 H8 V14 H12 V15.7Z" fill="#3cc83c" stroke="#2a6a2a" stroke-width=".5"/></svg>
<svg class="a" style="left:587px;top:296px" width="17" height="17" viewBox="0 0 17 17"><rect x="1" y="1" width="10" height="8" fill="#b0b0b0"/><rect x="8" y="4" width="7" height="12" fill="#909090"/></svg>
<div class="a " style="left:605px;top:294px;width:1px;height:20px;background:#4f4f4f"></div>
<svg class="a" style="left:609px;top:296px" width="16" height="17" viewBox="0 0 16 17"><path d="M4 1 H8 V10 H11 L6 16 L1 10 H4 Z" fill="#3c8de0"/><rect x="9" y="1" width="6" height="2.5" fill="#3cc03c"/><rect x="10" y="5" width="4" height="2.5" fill="#3cc03c"/><rect x="11" y="9" width="3" height="2.5" fill="#3cc03c"/><rect x="12" y="13" width="2" height="2" fill="#3cc03c"/></svg>
<div class="a t " style="left:415px;top:316px;font-family:'Liberation Serif',serif;font-style:italic;font-size:18px;line-height:22px;color:#1c5ae0;letter-spacing:0.3px">Trustees</div>
<div class="a t lbl" style="left:436px;top:339px;">Trustee</div>
<div class="a t lbl" style="left:662px;top:339px;">Designation</div>
<div class="a t" style="left:771px;width:200px;text-align:center;top:339px;color:#474747">Appointed</div>
<div class="a t" style="left:864px;width:200px;text-align:center;top:339px;color:#474747">Resigned</div>
<div class="a t" style="left:946px;width:200px;text-align:center;top:339px;color:#474747">Reason</div>
<div class="a t lbl" style="left:1081px;top:339px;">Representative</div>
<div class="a " style="left:415px;top:355px;width:800px;height:60px;background:#a9a9a9"></div>
<div class="a " style="left:416px;top:356px;width:19px;height:18px;background:#b3ffb3"></div>
<div class="a " style="left:436px;top:356px;width:226px;height:18px;background:#b3ffb3"></div>
<div class="a " style="left:663px;top:356px;width:161px;height:18px;background:#b3ffb3"></div>
<div class="a " style="left:826px;top:356px;width:91px;height:18px;background:#b3ffb3"></div>
<div class="a " style="left:919px;top:356px;width:91px;height:18px;background:#b3ffb3"></div>
<div class="a " style="left:1012px;top:356px;width:68px;height:18px;background:#b3ffb3"></div>
<div class="a " style="left:1082px;top:356px;width:120px;height:18px;background:#b3ffb3"></div>
<div class="a t " style="left:665px;top:356px;color:#000;line-height:18px;font-size:11px">TRUSTEE</div>
<div class="a t " style="left:827px;top:356px;color:#000;line-height:18px;font-size:13px">18/04/2023</div>
<div class="a t" style="left:897px;top:357px;width:19px;height:17px;background:#e6e6e6;border:1px solid #f4f4f4;color:#000;font-size:10px;line-height:16px;text-align:center;letter-spacing:-0.3px;border-color:#fff;box-shadow:inset 0 0 0 1px #8c8c8c;font-weight:bold;line-height:17px">...</div>
<div class="a t" style="left:991px;top:357px;width:19px;height:17px;background:#e6e6e6;border:1px solid #f4f4f4;color:#000;font-size:10px;line-height:16px;text-align:center;letter-spacing:-0.3px;border-color:#fff;box-shadow:inset 0 0 0 1px #8c8c8c;font-weight:bold;line-height:17px">...</div>
<div class="a " style="left:416px;top:376px;width:19px;height:18px;background:#c8d6df"></div>
<div class="a " style="left:436px;top:376px;width:226px;height:18px;background:#c8d6df"></div>
<div class="a " style="left:663px;top:376px;width:161px;height:18px;background:#c8d6df"></div>
<div class="a " style="left:826px;top:376px;width:91px;height:18px;background:#c8d6df"></div>
<div class="a " style="left:919px;top:376px;width:91px;height:18px;background:#c8d6df"></div>
<div class="a " style="left:1012px;top:376px;width:68px;height:18px;background:#c8d6df"></div>
<div class="a " style="left:1082px;top:376px;width:120px;height:18px;background:#c8d6df"></div>
<div class="a t " style="left:665px;top:376px;color:#7a7a7a;line-height:18px;font-size:11px">TRUSTEE</div>
<div class="a t " style="left:827px;top:376px;color:#7a7a7a;line-height:18px;font-size:13px">02/04/2020</div>
<div class="a t" style="left:897px;top:377px;width:19px;height:17px;background:#e6e6e6;border:1px solid #f4f4f4;color:#000;font-size:10px;line-height:16px;text-align:center;letter-spacing:-0.3px;border-color:#fff;box-shadow:inset 0 0 0 1px #8c8c8c;font-weight:bold;line-height:17px">...</div>
<div class="a t" style="left:991px;top:377px;width:19px;height:17px;background:#e6e6e6;border:1px solid #f4f4f4;color:#000;font-size:10px;line-height:16px;text-align:center;letter-spacing:-0.3px;border-color:#fff;box-shadow:inset 0 0 0 1px #8c8c8c;font-weight:bold;line-height:17px">...</div>
<div class="a t " style="left:920px;top:376px;color:#7a7a7a;line-height:18px;font-size:13px">18/04/2023</div>
<div class="a " style="left:416px;top:396px;width:19px;height:18px;background:#d6e3ec"></div>
<div class="a " style="left:436px;top:396px;width:226px;height:18px;background:#d6e3ec"></div>
<div class="a " style="left:663px;top:396px;width:161px;height:18px;background:#d6e3ec"></div>
<div class="a " style="left:826px;top:396px;width:91px;height:18px;background:#d6e3ec"></div>
<div class="a " style="left:919px;top:396px;width:91px;height:18px;background:#d6e3ec"></div>
<div class="a " style="left:1012px;top:396px;width:68px;height:18px;background:#d6e3ec"></div>
<div class="a " style="left:1082px;top:396px;width:120px;height:18px;background:#d6e3ec"></div>
<div class="a t " style="left:665px;top:396px;color:#7a7a7a;line-height:18px;font-size:11px">TRUSTEE</div>
<div class="a t " style="left:827px;top:396px;color:#7a7a7a;line-height:18px;font-size:13px">02/04/2020</div>
<div class="a t" style="left:897px;top:397px;width:19px;height:17px;background:#e6e6e6;border:1px solid #f4f4f4;color:#000;font-size:10px;line-height:16px;text-align:center;letter-spacing:-0.3px;border-color:#fff;box-shadow:inset 0 0 0 1px #8c8c8c;font-weight:bold;line-height:17px">...</div>
<div class="a t" style="left:991px;top:397px;width:19px;height:17px;background:#e6e6e6;border:1px solid #f4f4f4;color:#000;font-size:10px;line-height:16px;text-align:center;letter-spacing:-0.3px;border-color:#fff;box-shadow:inset 0 0 0 1px #8c8c8c;font-weight:bold;line-height:17px">...</div>
<div class="a " style="left:435px;top:355px;width:227px;height:20px;background:#b3ffb3;border:3px solid #3c7ddc"></div>
<div class="a " style="left:439px;top:359px;width:1px;height:12px;background:#000"></div>
<svg class="a" style="left:417px;top:358px" width="14" height="14" viewBox="0 0 14 14"><circle cx="7" cy="7" r="6.3" fill="#d8d8d8" stroke="#8a8a8a" stroke-width="1.2"/><circle cx="7" cy="7" r="4.6" fill="#2e9e3a"/><path d="M7 3.8 V10.2 M3.8 7 H10.2" stroke="#fff" stroke-width="2"/></svg>
<svg class="a" style="left:417px;top:378px" width="14" height="14" viewBox="0 0 14 14"><circle cx="7" cy="7" r="6.3" fill="#d8d8d8" stroke="#8a8a8a" stroke-width="1.2"/><circle cx="7" cy="7" r="4.6" fill="#d8202a"/><path d="M4.5 9.5 L9.5 4.5" stroke="#fff" stroke-width="2.2"/></svg>
<div class="a " style="left:435px;top:376px;width:240px;height:149px;background:#f5f3be;border:1px solid #8c8c8c;border-top:none"></div>
<div class="a" style="left:436px;top:376px;width:221px;height:148px;overflow:hidden">
<div class="a t" style="left:0;top:0;width:221px;height:17px;background:#0a6ad6;color:#fff;line-height:17px;padding-left:1px;padding-top:1px;font-size:11.5px">001|DONNY TRUST</div>
<div class="a t" style="left:1px;top:18px;color:#6b6b6b;line-height:17px;font-size:11.5px">BAS001|BASSON JUSTIN</div>
<div class="a t" style="left:1px;top:35px;color:#6b6b6b;line-height:17px;font-size:11.5px">BEE001|BEE HIVE GROUP</div>
<div class="a t" style="left:1px;top:52px;color:#6b6b6b;line-height:17px;font-size:11.5px">BO004|BEN BENSON</div>
<div class="a t" style="left:1px;top:69px;color:#6b6b6b;line-height:17px;font-size:11.5px">BO005|BENSON BENISE</div>
<div class="a t" style="left:1px;top:86px;color:#6b6b6b;line-height:17px;font-size:11.5px">BO006|NGWENYA BAZOTHINI</div>
<div class="a t" style="left:1px;top:103px;color:#6b6b6b;line-height:17px;font-size:11.5px">BO007|BUHLE MAZIBUKO</div>
<div class="a t" style="left:1px;top:120px;color:#6b6b6b;line-height:17px;font-size:11.5px">BO008|BANDILE MATHENJWA</div>
<div class="a t" style="left:1px;top:137px;color:#6b6b6b;line-height:17px;font-size:11.5px">BO009|NKOSI BENZILE</div>
</div>
<div class="a " style="left:657px;top:376px;width:17px;height:148px;background:#f0f0f0"></div>
<div class="a " style="left:658px;top:393px;width:15px;height:11px;background:#cdcdcd"></div>
<svg class="a" style="left:660px;top:379px" width="11" height="8" viewBox="0 0 11 8"><path d="M1.5 6 L5.5 2 L9.5 6" stroke="#555" stroke-width="1.4" fill="none"/></svg>
<svg class="a" style="left:660px;top:511px" width="11" height="8" viewBox="0 0 11 8"><path d="M1.5 2 L5.5 6 L9.5 2" stroke="#555" stroke-width="1.4" fill="none"/></svg>
</body></html>
